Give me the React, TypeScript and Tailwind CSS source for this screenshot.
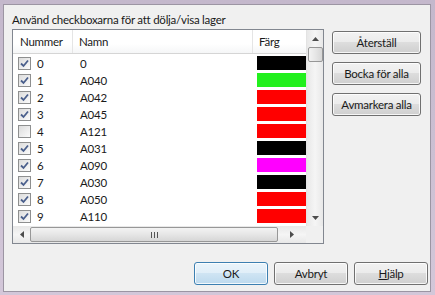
import React from 'react';

type Layer = { num: string; name: string; color: string; checked: boolean };

const layers: Layer[] = [
  { num: '0', name: '0', color: '#000000', checked: true },
  { num: '1', name: 'A040', color: '#22f01e', checked: true },
  { num: '2', name: 'A042', color: '#ff0000', checked: true },
  { num: '3', name: 'A045', color: '#ff0000', checked: true },
  { num: '4', name: 'A121', color: '#ff0000', checked: false },
  { num: '5', name: 'A031', color: '#000000', checked: true },
  { num: '6', name: 'A090', color: '#ff00ff', checked: true },
  { num: '7', name: 'A030', color: '#000000', checked: true },
  { num: '8', name: 'A050', color: '#ff0000', checked: true },
  { num: '9', name: 'A110', color: '#ff0000', checked: true },
];

function CheckBox({ checked }: { checked: boolean }) {
  return (
    <div className="w-[13px] h-[13px] border border-[#8e8f8f] bg-[linear-gradient(135deg,#dcdcdc,#fbfbfb)] flex items-center justify-center">
      {checked && (
        <svg width="9" height="9" viewBox="0 0 9 9">
          <path d="M1 4.5 L3.5 7 L8 1.5" fill="none" stroke="#4a5f8c" strokeWidth="1.8" />
        </svg>
      )}
    </div>
  );
}

function WinButton({ children, primary = false, className = '' }: { children: React.ReactNode; primary?: boolean; className?: string }) {
  return (
    <div
      className={`h-[23px] rounded-[3px] border flex items-center justify-center shadow-[inset_0_0_0_1px_rgba(255,255,255,0.8)] ${
        primary
          ? 'border-[#3c7fb1] bg-[linear-gradient(#eaf4fb_0%,#e0eef8_50%,#cfe4f3_50%,#bcd9ee_100%)]'
          : 'border-[#707070] bg-[linear-gradient(#f2f2f2_0%,#ebebeb_50%,#dddddd_50%,#cfcfcf_100%)]'
      } ${className}`}
    >
      {children}
    </div>
  );
}

function Arrow({ dir }: { dir: 'up' | 'down' | 'left' | 'right' }) {
  const pts = {
    up: '0,4 3.5,0 7,4',
    down: '0,0 7,0 3.5,4',
    left: '4,0 4,7 0,3.5',
    right: '0,0 0,7 4,3.5',
  }[dir];
  const w = dir === 'up' || dir === 'down' ? 7 : 4;
  const h = dir === 'up' || dir === 'down' ? 4 : 7;
  return (
    <svg width={w} height={h} viewBox={`0 0 ${w} ${h}`}>
      <polygon points={pts} fill="#4d4d4d" />
    </svg>
  );
}

export default function App() {
  return (
    <div
      className="w-[435px] h-[295px] bg-[linear-gradient(#c4b8cc,#d3c7d9)] pt-[4px] pl-[3px] overflow-hidden text-[#1a1a1a]"
      style={{ fontFamily: 'Lato, "Noto Sans", sans-serif' }}
    >
      <div className="w-[428px] h-[288px] border border-[#9c95a3] bg-[#f0f0f0] flex flex-col text-[11.5px] tracking-[-0.25px]">
        <div className="ml-[8px] mt-[7px] h-[16px] leading-[16px]">Använd checkboxarna för att dölja/visa lager</div>

        <div className="flex mt-[1px] ml-[8px]">
          {/* list */}
          <div className="w-[312px] h-[215px] border border-[#828790] bg-white flex flex-col">
            <div className="flex h-[196px]">
              <div className="w-[293px] flex flex-col">
                <div className="h-[24px] flex border-b border-[#d5d5d5] bg-[linear-gradient(#ffffff_60%,#f5f6f7)]">
                  <div className="w-[60px] pl-[7px] flex items-center border-r border-[#e5e5e5]">Nummer</div>
                  <div className="w-[180px] pl-[6px] flex items-center border-r border-[#e5e5e5]">Namn</div>
                  <div className="flex-1 pl-[6px] flex items-center">Färg</div>
                </div>
                <div className="flex flex-col pt-[1px]">
                  {layers.map((l) => (
                    <div key={l.num} className="h-[17px] flex items-center">
                      <div className="w-[61px] flex items-center pl-[5px]">
                        <CheckBox checked={l.checked} />
                        <span className="ml-[6px]">{l.num}</span>
                      </div>
                      <div className="w-[180px] pl-[6px]">{l.name}</div>
                      <div className="flex-1 pl-[3px] flex items-start h-full pt-[1px]">
                        <div className="w-[49px] h-[14px]" style={{ backgroundColor: l.color }} />
                      </div>
                    </div>
                  ))}
                </div>
              </div>
              {/* vertical scrollbar */}
              <div className="w-[17px] border-l border-[#e3e3e3] bg-[linear-gradient(90deg,#e8e8e8,#f5f5f5,#e8e8e8)] flex flex-col items-center">
                <div className="h-[17px] flex items-center justify-center">
                  <Arrow dir="up" />
                </div>
                <div className="w-[15px] h-[15px] rounded-[2px] border border-[#979797] bg-[linear-gradient(90deg,#f3f3f3,#e6e6e6_50%,#d6d6d6)]" />
                <div className="flex-1" />
                <div className="h-[17px] flex items-center justify-center">
                  <Arrow dir="down" />
                </div>
              </div>
            </div>
            {/* horizontal scrollbar */}
            <div className="flex h-[17px]">
              <div className="w-[293px] bg-[linear-gradient(#e8e8e8,#f5f5f5,#e8e8e8)] flex items-center">
                <div className="w-[17px] flex items-center justify-center">
                  <Arrow dir="left" />
                </div>
                <div className="w-[248px] h-[15px] rounded-[2px] border border-[#979797] bg-[linear-gradient(#f3f3f3,#e6e6e6_50%,#d6d6d6)] flex items-center justify-center">
                  <div className="flex gap-[2px]">
                    <div className="w-[1px] h-[6px] bg-[#555]" />
                    <div className="w-[1px] h-[6px] bg-[#555]" />
                    <div className="w-[1px] h-[6px] bg-[#555]" />
                  </div>
                </div>
                <div className="flex-1 flex items-center justify-center">
                  <Arrow dir="right" />
                </div>
              </div>
              <div className="flex-1 bg-[#f0f0f0]" />
            </div>
          </div>

          {/* side buttons */}
          <div className="ml-[8px] mt-[2px] w-[89px] flex flex-col gap-[8px]">
            <WinButton>Återställ</WinButton>
            <WinButton>Bocka för alla</WinButton>
            <WinButton>Avmarkera alla</WinButton>
          </div>
        </div>

        <div className="flex justify-end gap-[6px] mt-[18px] pr-[2px]">
          <WinButton primary className="w-[74px]">OK</WinButton>
          <WinButton className="w-[74px]">Avbryt</WinButton>
          <WinButton className="w-[74px]">
            <span>
              <span className="underline">H</span>jälp
            </span>
          </WinButton>
        </div>
      </div>
    </div>
  );
}
